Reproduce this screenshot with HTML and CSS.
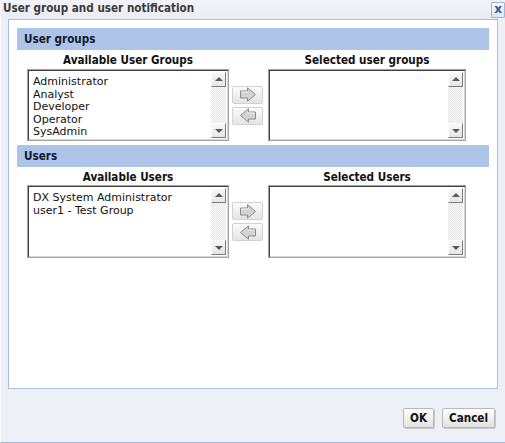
FILE: index.html
```html
<!DOCTYPE html>
<html>
<head>
<meta charset="utf-8">
<link rel="stylesheet" href="styles.css">
</head>
<body>
<div class="dialog">
  <div class="titlebar">
    <span class="title">User group and user notification</span>
    <span class="close">x</span>
  </div>
  <div class="panel">
    <div class="section-bar">User groups</div>
    <div class="picker">
      <div class="col-head">Available User Groups</div>
      <div class="spacer"></div>
      <div class="col-head">Selected user groups</div>
      <div class="listbox">
        <div class="items">
          <div>Administrator</div>
          <div>Analyst</div>
          <div>Developer</div>
          <div>Operator</div>
          <div>SysAdmin</div>
        </div>
        <div class="scrollbar"><span class="sb-btn up"></span><span class="sb-track"></span><span class="sb-btn down"></span></div>
      </div>
      <div class="movers">
        <span class="mover"><svg width="18" height="15" viewBox="0 0 18 15"><path d="M1.5 4 H8.5 V0.8 L16.5 7.5 L8.5 14.2 V11 H1.5 Z" fill="#d3d3d3" stroke="#8a8a8a" stroke-width="1" stroke-linejoin="round"/><path d="M2.5 5 H9.5" stroke="#f2f2f2" stroke-width="1"/></svg></span>
        <span class="mover"><svg width="18" height="15" viewBox="0 0 18 15"><path d="M16.5 4 H9.5 V0.8 L1.5 7.5 L9.5 14.2 V11 H16.5 Z" fill="#d3d3d3" stroke="#8a8a8a" stroke-width="1" stroke-linejoin="round"/><path d="M8.5 5 H15.5" stroke="#f2f2f2" stroke-width="1"/></svg></span>
      </div>
      <div class="listbox">
        <div class="items"></div>
        <div class="scrollbar"><span class="sb-btn up"></span><span class="sb-track"></span><span class="sb-btn down"></span></div>
      </div>
    </div>
    <div class="section-bar">Users</div>
    <div class="picker picker-users">
      <div class="col-head">Available Users</div>
      <div class="spacer"></div>
      <div class="col-head">Selected Users</div>
      <div class="listbox">
        <div class="items">
          <div>DX System Administrator</div>
          <div>user1 - Test Group</div>
        </div>
        <div class="scrollbar"><span class="sb-btn up"></span><span class="sb-track"></span><span class="sb-btn down"></span></div>
      </div>
      <div class="movers">
        <span class="mover"><svg width="18" height="15" viewBox="0 0 18 15"><path d="M1.5 4 H8.5 V0.8 L16.5 7.5 L8.5 14.2 V11 H1.5 Z" fill="#d3d3d3" stroke="#8a8a8a" stroke-width="1" stroke-linejoin="round"/><path d="M2.5 5 H9.5" stroke="#f2f2f2" stroke-width="1"/></svg></span>
        <span class="mover"><svg width="18" height="15" viewBox="0 0 18 15"><path d="M16.5 4 H9.5 V0.8 L1.5 7.5 L9.5 14.2 V11 H16.5 Z" fill="#d3d3d3" stroke="#8a8a8a" stroke-width="1" stroke-linejoin="round"/><path d="M8.5 5 H15.5" stroke="#f2f2f2" stroke-width="1"/></svg></span>
      </div>
      <div class="listbox">
        <div class="items"></div>
        <div class="scrollbar"><span class="sb-btn up"></span><span class="sb-track"></span><span class="sb-btn down"></span></div>
      </div>
    </div>
  </div>
  <div class="footer">
    <span class="btn btn-ok">OK</span>
    <span class="btn">Cancel</span>
  </div>
</div>
</body>
</html>
```

FILE: styles.css
```css
html, body {
  margin: 0;
  padding: 0;
}
body {
  width: 505px;
  height: 443px;
  overflow: hidden;
  background: #eef0f8;
  font-family: "DejaVu Sans", Verdana, sans-serif;
  font-size: 11px;
  color: #000;
}
.dialog {
  width: 505px;
  height: 443px;
  box-sizing: border-box;
  border-bottom: 1px solid #9fb3d3;
  border-left: 1px solid #f8f9fd;
  background: #eef0f8;
  display: flex;
  flex-direction: column;
}
.titlebar {
  height: 19px;
  flex: none;
  display: flex;
  align-items: flex-start;
  justify-content: space-between;
  background: linear-gradient(#f3f4f9, #eaecf5);
}
.title {
  font-family: "DejaVu Sans Condensed", "DejaVu Sans", sans-serif;
  font-weight: bold;
  font-size: 11.6px;
  color: #3b3b3b;
  padding-left: 2px;
  line-height: 16px;
}
.close {
  width: 12px;
  height: 14px;
  margin-top: 2px;
  margin-right: 0;
  border: 1px solid #a7b5cf;
  border-radius: 1px;
  background: linear-gradient(#f7f8fc, #dfe4ef);
  color: #2f5a9c;
  font-weight: bold;
  font-size: 12px;
  line-height: 12px;
  text-align: center;
  font-family: "DejaVu Sans", sans-serif;
}
.panel {
  flex: none;
  height: 370px;
  box-sizing: border-box;
  margin: 0 7px 0 7px;
  background: #fff;
  border: 1px solid #a9bedc;
  padding: 8px 8px 0 8px;
}
.section-bar {
  height: 22px;
  background: #adc3e8;
  font-family: "DejaVu Sans Condensed", "DejaVu Sans", sans-serif;
  font-weight: bold;
  font-size: 11.6px;
  color: #111a2a;
  line-height: 22px;
  padding-left: 7px;
}
.picker {
  display: grid;
  grid-template-columns: 202px 39px 198px;
  grid-template-rows: 19px 72px;
  padding-left: 10px;
  margin-bottom: 4px;
}
.picker-users {
  grid-template-rows: 18px 73px;
}
.col-head {
  text-align: center;
  font-family: "DejaVu Sans Condensed", "DejaVu Sans", sans-serif;
  font-weight: bold;
  font-size: 11.6px;
  color: #111;
  line-height: 17px;
  padding-top: 2px;
}
.listbox {
  display: flex;
  box-sizing: border-box;
  border: 1px solid #a3a3a3;
  box-shadow: inset 1px 1px 0 #404040, inset -1px -1px 0 #d8d8d8;
  background: #fff;
  padding: 1px;
}
.items {
  flex: 1;
  padding: 5px 4px 2px 4px;
  line-height: 12.5px;
  color: #111;
}
.scrollbar {
  width: 15px;
  margin: 1px 1px 1px 0;
  display: flex;
  flex-direction: column;
}
.sb-btn {
  height: 15px;
  flex: none;
  box-sizing: border-box;
  background: linear-gradient(#f7f7f7, #e6e6e6);
  border-top: 1px solid #fff;
  border-left: 1px solid #fff;
  border-right: 1px solid #7a7a7a;
  border-bottom: 1px solid #7a7a7a;
  position: relative;
}
.sb-btn::after {
  content: "";
  position: absolute;
  left: 3px;
  top: 4px;
  width: 0;
  height: 0;
  border-left: 4px solid transparent;
  border-right: 4px solid transparent;
}
.sb-btn.up::after {
  border-bottom: 4px solid #5a5a5a;
}
.sb-btn.down::after {
  top: 5px;
  border-top: 4px solid #5a5a5a;
}
.sb-track {
  flex: 1;
  background-color: #f4f4f4;
  background-image: repeating-conic-gradient(#e4e4e4 0 25%, #fcfcfc 0 50%);
  background-size: 2px 2px;
}
.movers {
  display: flex;
  flex-direction: column;
  justify-content: center;
  gap: 3px;
  padding-left: 3px;
}
.mover {
  width: 31px;
  height: 18px;
  box-sizing: border-box;
  border: 1px solid #d2d2d2;
  border-radius: 2px;
  background: linear-gradient(#fbfbfb, #e4e4e4);
  display: flex;
  align-items: center;
  justify-content: center;
}
.footer {
  flex: 1;
  display: flex;
  justify-content: flex-end;
  align-items: flex-start;
  gap: 8px;
  padding: 19px 10px 0 0;
}
.btn {
  height: 20px;
  box-sizing: border-box;
  padding: 0 6px;
  border: 1px solid #b9b9b9;
  border-radius: 2px;
  background: linear-gradient(#ffffff, #e2e2e2);
  box-shadow: 1px 1px 0 #c8c8c8;
  font-family: "DejaVu Sans Condensed", "DejaVu Sans", sans-serif;
  font-weight: bold;
  font-size: 11.6px;
  line-height: 18px;
  color: #111;
}
.btn-ok {
  min-width: 30px;
  text-align: center;
}
```
